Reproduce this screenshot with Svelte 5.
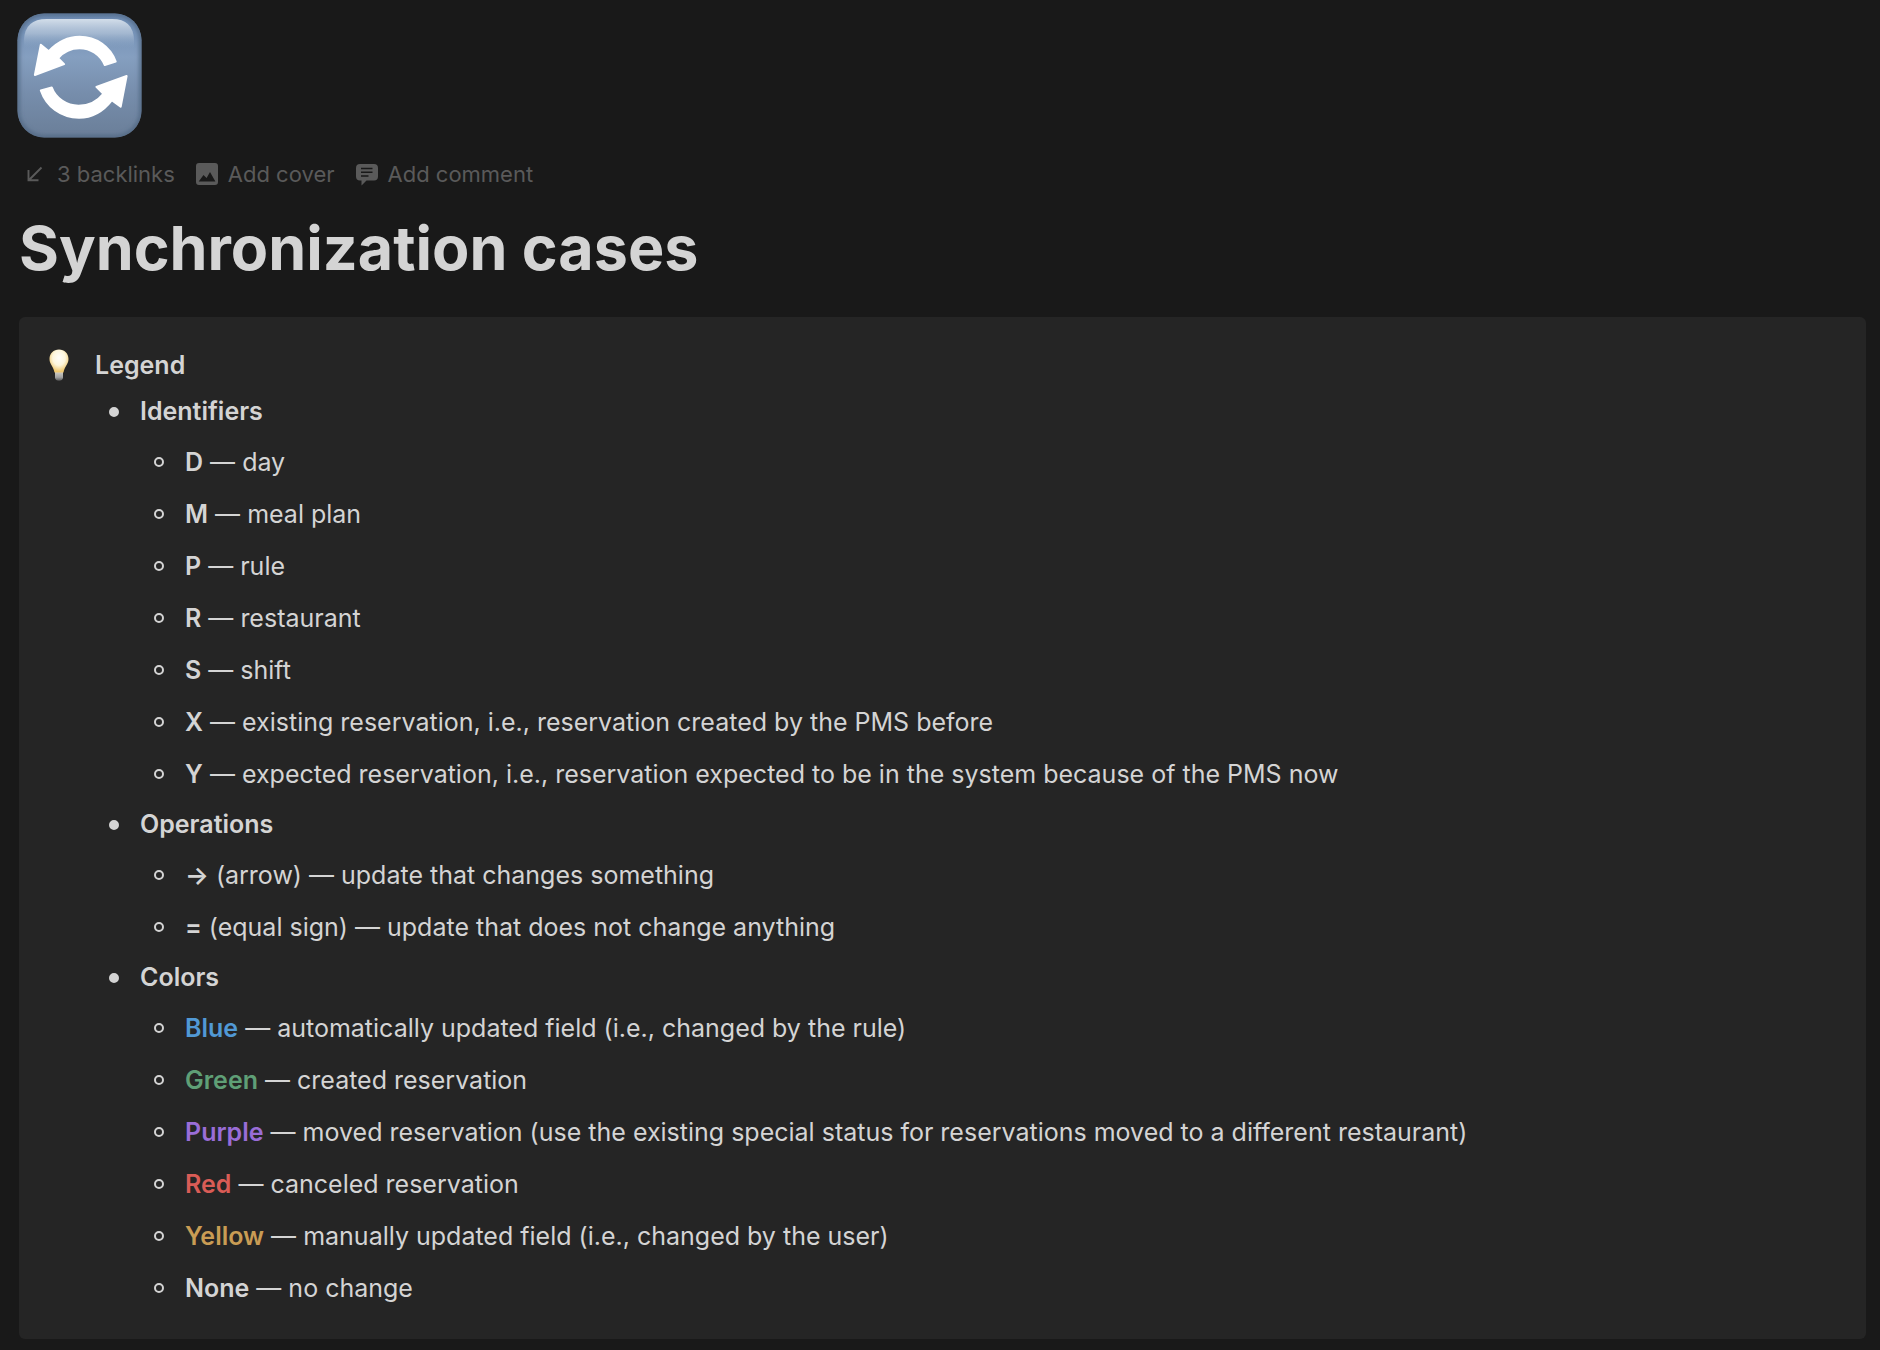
<script>
  const groups = [
    {
      title: 'Identifiers',
      items: [
        { term: 'D', text: '— day' },
        { term: 'M', text: '— meal plan' },
        { term: 'P', text: '— rule' },
        { term: 'R', text: '— restaurant' },
        { term: 'S', text: '— shift' },
        { term: 'X', text: '— existing reservation, i.e., reservation created by the PMS before' },
        { term: 'Y', text: '— expected reservation, i.e., reservation expected to be in the system because of the PMS now' },
      ],
    },
    {
      title: 'Operations',
      items: [
        { term: '→', text: '(arrow) — update that changes something' },
        { term: '=', text: '(equal sign) — update that does not change anything' },
      ],
    },
    {
      title: 'Colors',
      items: [
        { term: 'Blue', color: 'blue', text: '— automatically updated field (i.e., changed by the rule)' },
        { term: 'Green', color: 'green', text: '— created reservation' },
        { term: 'Purple', color: 'purple', text: '— moved reservation (use the existing special status for reservations moved to a different restaurant)' },
        { term: 'Red', color: 'red', text: '— canceled reservation' },
        { term: 'Yellow', color: 'yellow', text: '— manually updated field (i.e., changed by the user)' },
        { term: 'None', text: '— no change' },
      ],
    },
  ]
</script>

<main class="page">
  <button class="page-icon" aria-label="Change page icon">
    <svg viewBox="0 0 126 126" aria-hidden="true">
      <defs>
        <linearGradient id="tile" x1="0" y1="0" x2="0" y2="1">
          <stop offset="0" stop-color="#6b8ab2" />
          <stop offset="0.35" stop-color="#859fc0" />
          <stop offset="0.65" stop-color="#768dab" />
          <stop offset="1" stop-color="#6a7e98" />
        </linearGradient>
        <linearGradient id="gloss" x1="0" y1="0" x2="0" y2="1">
          <stop offset="0" stop-color="#d3deea" />
          <stop offset="0.5" stop-color="#b0c2d7" stop-opacity="0.75" />
          <stop offset="1" stop-color="#859fc0" stop-opacity="0" />
        </linearGradient>
        <filter id="soft" x="-10%" y="-10%" width="120%" height="120%">
          <feGaussianBlur stdDeviation="2" />
        </filter>
        <clipPath id="tile-clip">
          <rect x="0.5" y="0.5" width="125" height="125" rx="27" />
        </clipPath>
      </defs>
      <g clip-path="url(#tile-clip)">
        <rect width="126" height="126" fill="url(#tile)" />
        <rect x="0.5" y="0.5" width="125" height="125" rx="27" fill="none" stroke="#506682" stroke-width="4" filter="url(#soft)" />
        <path d="M7 36V27Q8 6 30 6H96Q117 6 118 27V36Z" fill="url(#gloss)" />
      </g>
      <g fill="#fff" stroke="#fff" stroke-width="2" stroke-linejoin="round">
        <path d="M24 32L32 38.500C42 28 52 24 63 24C80 24 94 34 99.500 49L88.500 52.500C84 42 74 35.500 63 35.500C54 35.500 47 39 41.500 45.500L47.500 51.500L18 62.500Z" />
        <path d="M24 78L35 75C39 86 50 93.500 62 93.500C72 93.500 81 89 87 81.500L80 74.500L110.500 63.500L104.500 94.500L95.500 88C87 99 76 105.500 62.500 105.500C44 105.500 29.500 94 24 78Z" />
      </g>
    </svg>
  </button>

  <div class="actions">
    <button class="backlinks">
      <svg width="16" height="16" viewBox="0 0 16 16" fill="none" stroke="currentColor" stroke-width="1.9" aria-hidden="true">
        <path d="M14.500 1.500L2.500 13.500M1.500 4V14.300H11.500" />
      </svg>
      3 backlinks
    </button>
    <button>
      <svg width="22" height="24" viewBox="0 0 22 24" fill="currentColor" aria-hidden="true">
        <path fill-rule="evenodd" d="M3 1H19Q22 1 22 4V20Q22 23 19 23H3Q0 23 0 20V4Q0 1 3 1ZM2.700 19.500H19.400L14 10L10.600 16L7.500 13Z" />
      </svg>
      Add cover
    </button>
    <button>
      <svg width="22" height="24" viewBox="0 0 22 24" fill="currentColor" aria-hidden="true">
        <path fill-rule="evenodd" d="M4 2H18Q22 2 22 6V14.500Q22 18.500 18 18.500H10.500L5.500 23.500V18.500H4Q0 18.500 0 14.500V6Q0 2 4 2ZM5 5.800V7.300H16.500V5.800ZM5 9.500V11H16.500V9.500ZM5 13.200V14.700H12.500V13.200Z" />
      </svg>
      Add comment
    </button>
  </div>

  <h1>Synchronization cases</h1>

  <section class="callout">
    <svg class="bulb" width="20" height="32" viewBox="0 0 20 32" aria-hidden="true">
      <defs>
        <radialGradient id="glass" cx="0.5" cy="0.36" r="0.6">
          <stop offset="0" stop-color="#fffefa" />
          <stop offset="0.55" stop-color="#fdf6dc" />
          <stop offset="1" stop-color="#eec66c" />
        </radialGradient>
        <linearGradient id="cap" x1="0" y1="0" x2="0" y2="1">
          <stop offset="0" stop-color="#cfccc4" />
          <stop offset="0.6" stop-color="#a0a0a0" />
          <stop offset="1" stop-color="#555" />
        </linearGradient>
      </defs>
      <path d="M6 23H14V29Q13.500 31.500 10 31.800Q6.500 31.500 6 29Z" fill="url(#cap)" />
      <path d="M10 0.500C4.500 0.500 0.500 4.600 0.500 10C0.500 15.500 4.600 17.500 5.500 23.500H14.500C15.400 17.500 19.500 15.500 19.500 10C19.500 4.600 15.500 0.500 10 0.500Z" fill="url(#glass)" />
    </svg>

    <div class="content">
      <h2>Legend</h2>
      <ul class="groups">
        {#each groups as group}
          <li>
            <div class="row head">{group.title}</div>
            <ul class="items">
              {#each group.items as item}
                <li class="row"><span><b class={item.color}>{item.term}</b> {item.text}</span></li>
              {/each}
            </ul>
          </li>
        {/each}
      </ul>
    </div>
  </section>
</main>

<style>
  :global(body) { background: #191919; }

  .page {
    padding: 13px 14px 11px 19px;
    color: #d4d4d4;
    font-family: Inter, "Liberation Sans", sans-serif;
    font-size: 25px;
  }

  button {
    padding: 0;
    border: 0;
    background: none;
    color: inherit;
    font: inherit;
    cursor: pointer;
  }

  .page-icon { display: block; width: 125px; height: 125px; margin-left: -2px; }
  .page-icon svg { display: block; }

  .actions { display: flex; gap: 21px; margin-top: 20px; padding-left: 8px; color: #5a5a5a; font-size: 22px; }
  .actions button { display: flex; align-items: center; gap: 10px; line-height: 32px; }
  .actions .backlinks { gap: 14px; }

  h1 { margin: 19px 0 0; font-size: 61px; font-weight: 700; line-height: 78px; }

  .callout {
    display: flex;
    gap: 26px;
    margin-top: 30px;
    padding: 27px 30px 25px;
    border-radius: 6px;
    background: #252525;
  }
  .bulb { flex-shrink: 0; margin-top: 5px; }
  .content { flex: 1; min-width: 0; }

  h2 { margin: 0 0 1px; font-size: 25px; font-weight: 600; line-height: 42px; }

  ul { margin: 0; padding: 0; list-style: none; }
  .groups { padding-left: 14px; }
  .items { padding-left: 45px; }

  .row { display: flex; align-items: center; gap: 21px; line-height: 52px; }
  .row::before {
    content: "";
    box-sizing: border-box;
    flex-shrink: 0;
    width: 10px;
    height: 10px;
    border: 2px solid #d4d4d4;
    border-radius: 50%;
  }
  .head { font-weight: 600; line-height: 49px; }
  .head::before { background: #d4d4d4; }

  b { font-weight: 600; }
  .blue { color: #5199d5; }
  .green { color: #5f9f76; }
  .purple { color: #9a6dd7; }
  .red { color: #d95c56; }
  .yellow { color: #c99c54; }
</style>
